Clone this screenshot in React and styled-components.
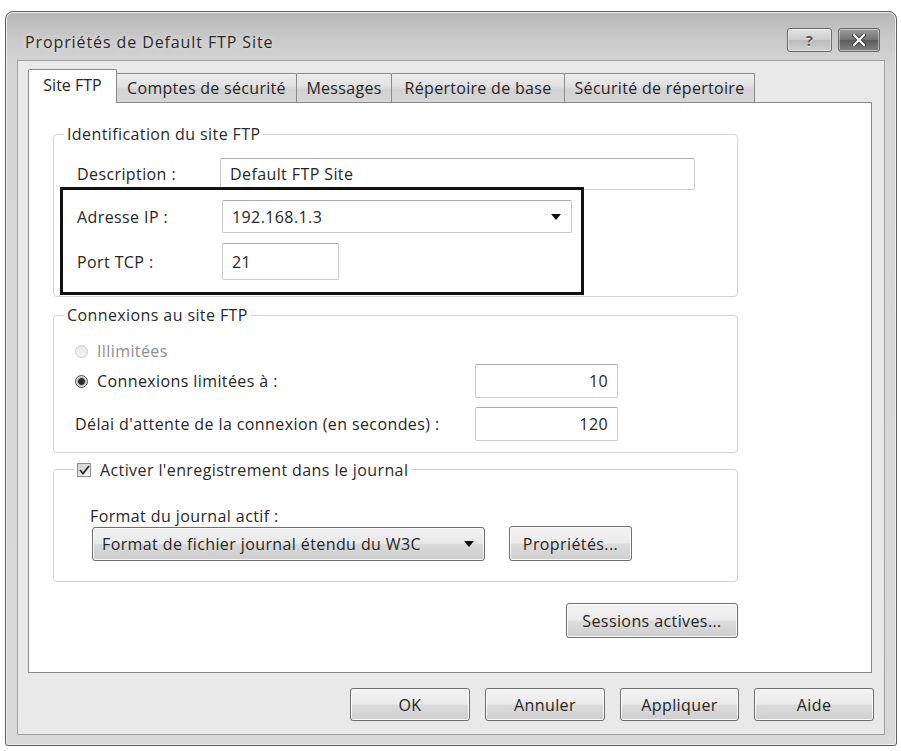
import React from "react";
import styled, { createGlobalStyle } from "styled-components";

const GlobalStyle = createGlobalStyle`
  html, body { margin: 0; padding: 0; background: #ffffff; }
  body {
    font-family: "Open Sans", "Noto Sans", "DejaVu Sans", sans-serif;
    font-size: 16px;
    letter-spacing: 0.4px;
    color: #252525;
  }
  * { box-sizing: border-box; }
`;

const Page = styled.div`
  width: 901px;
  height: 751px;
  padding: 11px 4px 0 5px;
`;

const Window = styled.div`
  width: 892px;
  height: 735px;
  border: 1px solid #5f5f5f;
  border-radius: 8px 8px 3px 3px;
  background: linear-gradient(to bottom, #b6b6b6 0px, #cacaca 28px, #d6d6d6 56px, #d9d9d9 100%);
  box-shadow: inset 0 0 0 1px #eeeeee;
  display: flex;
  flex-direction: column;
`;

const TitleBar = styled.div`
  height: 48px;
  flex: none;
  display: flex;
  align-items: center;
  padding: 8px 16px 0 19px;
`;

const Title = styled.div`
  font-size: 16px;
  color: #2b2b2b;
  letter-spacing: 0.9px;
  padding-top: 3px;
  text-shadow: 0 0 6px rgba(255, 255, 255, 0.7);
`;

const CaptionButtons = styled.div`
  margin-left: auto;
  display: flex;
  gap: 6px;
`;

const CaptionButton = styled.div`
  width: ${(p) => p.$w}px;
  height: 24px;
  border: 1px solid #6a6a6a;
  border-radius: 3px;
  background: ${(p) =>
    p.$close
      ? "linear-gradient(to bottom, #9c9c9c 0%, #747474 48%, #5c5c5c 52%, #828282 100%)"
      : "linear-gradient(to bottom, #e3e3e3 0%, #cdcdcd 48%, #bbbbbb 52%, #d1d1d1 100%)"};
  box-shadow: inset 0 0 0 1px rgba(255, 255, 255, 0.45);
  display: flex;
  align-items: center;
  justify-content: center;
  font-weight: 700;
  font-size: 15px;
  color: #5a5a5a;
  text-shadow: 0 1px 0 #f4f4f4;
`;

const Client = styled.div`
  flex: 1;
  margin: 0 11px 10px 11px;
  background: #e9e9e9;
  border: 1px solid #a2a2a2;
  padding: 8px 12px 0 10px;
  display: flex;
  flex-direction: column;
`;

const TabRow = styled.div`
  height: 33px;
  display: flex;
  align-items: flex-end;
  position: relative;
  z-index: 1;
`;

const Tab = styled.div`
  width: ${(p) => p.$w}px;
  height: ${(p) => (p.$active ? 34 : 29)}px;
  margin-bottom: ${(p) => (p.$active ? -1 : 0)}px;
  margin-left: ${(p) => (p.$first ? 0 : -1)}px;
  border: 1px solid #8b8b8b;
  border-bottom: none;
  border-radius: 2px 2px 0 0;
  background: ${(p) =>
    p.$active ? "#ffffff" : "linear-gradient(to bottom, #ededed 0%, #e0e0e0 45%, #d2d2d2 55%, #d6d6d6 100%)"};
  display: flex;
  align-items: center;
  justify-content: center;
  padding-bottom: ${(p) => (p.$active ? 3 : 0)}px;
  font-size: 16px;
  letter-spacing: ${(p) => (p.$active ? 0 : 0.3)}px;
  color: #262626;
  white-space: nowrap;
  position: relative;
  z-index: ${(p) => (p.$active ? 2 : 1)};
`;

const Panel = styled.div`
  height: 571px;
  flex: none;
  background: #ffffff;
  border: 1px solid #8a8a8a;
  padding: 21px 0 0 24px;
  display: flex;
  flex-direction: column;
`;

const Group = styled.fieldset`
  width: 685px;
  margin: ${(p) => p.$mt || 0}px 0 0 0;
  border: 1px solid #d4d4d4;
  border-radius: 4px;
  padding: 0 0 ${(p) => p.$pb}px 6px;
  min-inline-size: 0;
`;

const Legend = styled.legend`
  padding: 0 3px;
  margin-left: ${(p) => p.$ml}px;
  line-height: 20px;
  font-size: 16px;
  color: #2a2a2a;
`;

const LegendInner = styled.span`
  display: inline-flex;
  align-items: center;
  gap: 9px;
`;

const Row = styled.div`
  display: flex;
  align-items: center;
  margin-top: ${(p) => p.$mt || 0}px;
  padding-left: ${(p) => p.$pl || 0}px;
  gap: ${(p) => p.$gap || 0}px;
`;

const Label = styled.div`
  width: ${(p) => p.$w}px;
  flex: none;
  line-height: 20px;
  white-space: nowrap;
  color: ${(p) => (p.$disabled ? "#8d8d8d" : "#262626")};
  display: flex;
  align-items: center;
  gap: 9px;
`;

const TextBox = styled.div`
  width: ${(p) => p.$w}px;
  height: ${(p) => p.$h}px;
  flex: none;
  background: #ffffff;
  border: 1px solid #cbcbcb;
  border-top-color: #adadad;
  border-radius: 2px;
  padding: 0 9px;
  display: flex;
  align-items: center;
  justify-content: ${(p) => (p.$right ? "flex-end" : "flex-start")};
  color: #262626;
`;

const Highlight = styled.div`
  width: 524px;
  margin-top: -3px;
  border: 3px solid #111111;
  padding: 10px 0 12px 14px;
  position: relative;
`;

const Combo = styled.div`
  width: ${(p) => p.$w}px;
  height: ${(p) => p.$h}px;
  flex: none;
  border: 1px solid ${(p) => (p.$button ? "#6f6f6f" : "#c9c9c9")};
  border-top-color: ${(p) => (p.$button ? "#6f6f6f" : "#adadad")};
  border-radius: ${(p) => (p.$button ? 3 : 2)}px;
  background: ${(p) =>
    p.$button
      ? "linear-gradient(to bottom, #f2f2f2 0%, #e9e9e9 48%, #d9d9d9 52%, #cdcdcd 100%)"
      : "#ffffff"};
  box-shadow: ${(p) => (p.$button ? "inset 0 0 0 1px #f8f8f8" : "none")};
  padding: 0 10px 0 9px;
  display: flex;
  align-items: center;
  justify-content: space-between;
  white-space: nowrap;
  color: #262626;
`;

const Radio = styled.span`
  width: 13px;
  height: 13px;
  flex: none;
  border-radius: 50%;
  border: 1px solid ${(p) => (p.$disabled ? "#cccccc" : "#4d4d4d")};
  background: ${(p) =>
    p.$disabled ? "linear-gradient(#e6e6e6, #f6f6f6)" : "radial-gradient(circle, #2a2a2a 0 3px, #9a9a9a 3.5px, #e2e2e2 5px)"};
  display: inline-block;
`;

const CheckBox = styled.span`
  width: 14px;
  height: 14px;
  flex: none;
  border: 1px solid #8d8d8d;
  background: linear-gradient(to bottom right, #cfcfcf, #f5f5f5);
  display: inline-flex;
  align-items: center;
  justify-content: center;
`;

const Button = styled.div`
  width: ${(p) => p.$w}px;
  height: ${(p) => p.$h || 33}px;
  flex: none;
  border: 1px solid #6f6f6f;
  border-radius: 3px;
  background: linear-gradient(to bottom, #f3f3f3 0%, #ebebeb 48%, #dcdcdc 52%, #cfcfcf 100%);
  box-shadow: inset 0 0 0 1px #fbfbfb;
  display: flex;
  align-items: center;
  justify-content: center;
  white-space: nowrap;
  color: #262626;
`;

const RightRow = styled.div`
  width: 685px;
  display: flex;
  justify-content: flex-end;
  margin-top: 21px;
`;

const Footer = styled.div`
  display: flex;
  justify-content: flex-end;
  gap: 15px;
  padding-top: 15px;
  margin-right: -2px;
`;

const Arrow = () => (
  <svg width="10" height="6" viewBox="0 0 10 6">
    <path d="M0 0 H10 L5 6 Z" fill="#111" />
  </svg>
);

const CloseGlyph = () => (
  <svg width="14" height="12" viewBox="0 0 14 12">
    <path d="M2 1 L12 11 M12 1 L2 11" stroke="#3a3a3a" strokeWidth="4" strokeLinecap="round" />
    <path d="M2 1 L12 11 M12 1 L2 11" stroke="#ffffff" strokeWidth="2.2" strokeLinecap="round" />
  </svg>
);

const Check = () => (
  <svg width="11" height="10" viewBox="0 0 11 10">
    <path d="M1 5 L4 8.5 L10 1" stroke="#2b2b2b" strokeWidth="1.8" fill="none" />
  </svg>
);

const tabs = [
  { label: "Site FTP", w: 89, active: true },
  { label: "Comptes de sécurité", w: 181 },
  { label: "Messages", w: 96 },
  { label: "Répertoire de base", w: 174 },
  { label: "Sécurité de répertoire", w: 191 },
];

export default function App() {
  return (
    <>
      <GlobalStyle />
      <Page>
        <Window>
          <TitleBar>
            <Title>Propriétés de Default FTP Site</Title>
            <CaptionButtons>
              <CaptionButton $w={45}>?</CaptionButton>
              <CaptionButton $w={42} $close>
                <CloseGlyph />
              </CaptionButton>
            </CaptionButtons>
          </TitleBar>
          <Client>
            <TabRow>
              {tabs.map((t, i) => (
                <Tab key={t.label} $w={t.w} $active={t.active} $first={i === 0}>
                  {t.label}
                </Tab>
              ))}
            </TabRow>
            <Panel>
              <Group $pb={1}>
                <Legend $ml={4}>Identification du site FTP</Legend>
                <Row $mt={14} $pl={17}>
                  <Label $w={143}>Description :</Label>
                  <TextBox $w={475} $h={32}>Default FTP Site</TextBox>
                </Row>
                <Highlight>
                  <Row>
                    <Label $w={145}>Adresse IP :</Label>
                    <Combo $w={350} $h={33}>
                      <span>192.168.1.3</span>
                      <Arrow />
                    </Combo>
                  </Row>
                  <Row $mt={10}>
                    <Label $w={145}>Port TCP :</Label>
                    <TextBox $w={117} $h={37}>21</TextBox>
                  </Row>
                </Highlight>
              </Group>

              <Group $mt={8} $pb={11}>
                <Legend $ml={4}>Connexions au site FTP</Legend>
                <Row $mt={16} $pl={15}>
                  <Label $w={400} $disabled>
                    <Radio $disabled />
                    Illimitées
                  </Label>
                </Row>
                <Row $mt={3} $pl={15}>
                  <Label $w={400}>
                    <Radio />
                    Connexions limitées à :
                  </Label>
                  <TextBox $w={143} $h={34} $right>10</TextBox>
                </Row>
                <Row $mt={9} $pl={15}>
                  <Label $w={400}>Délai d'attente de la connexion (en secondes) :</Label>
                  <TextBox $w={143} $h={34} $right>120</TextBox>
                </Row>
              </Group>

              <Group $mt={6} $pb={20}>
                <Legend $ml={14}>
                  <LegendInner>
                    <CheckBox>
                      <Check />
                    </CheckBox>
                    Activer l'enregistrement dans le journal
                  </LegendInner>
                </Legend>
                <Row $mt={26} $pl={30}>
                  <Label $w={300}>Format du journal actif :</Label>
                </Row>
                <Row $pl={32} $gap={24}>
                  <Combo $w={393} $h={34} $button>
                    <span>Format de fichier journal étendu du W3C</span>
                    <Arrow />
                  </Combo>
                  <Button $w={123} $h={35}>Propriétés...</Button>
                </Row>
              </Group>

              <RightRow>
                <Button $w={172} $h={35}>Sessions actives...</Button>
              </RightRow>
            </Panel>
            <Footer>
              <Button $w={120}>OK</Button>
              <Button $w={120}>Annuler</Button>
              <Button $w={119}>Appliquer</Button>
              <Button $w={120}>Aide</Button>
            </Footer>
          </Client>
        </Window>
      </Page>
    </>
  );
}
